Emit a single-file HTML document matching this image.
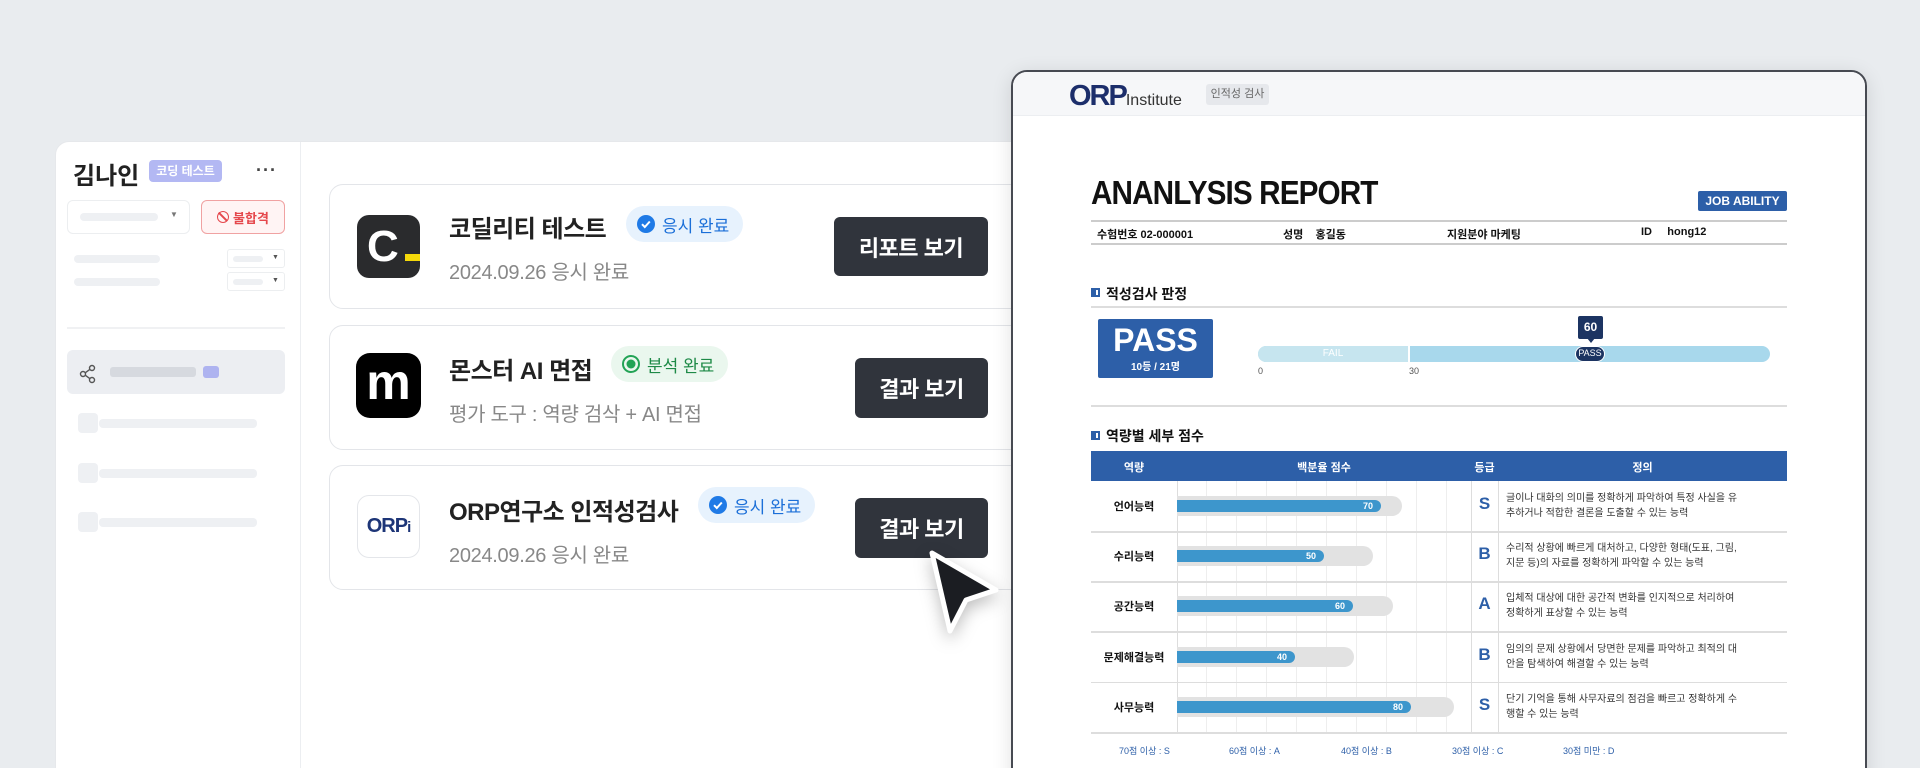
<!DOCTYPE html>
<html><head><meta charset="utf-8"><style>
*{box-sizing:border-box;margin:0;padding:0}
html,body{width:1920px;height:768px;overflow:hidden}
body{background:#e9ecef;font-family:"Liberation Sans","Noto Sans CJK KR",sans-serif}
#w{position:relative;width:1920px;height:768px;overflow:hidden;background:#e9ecef}
.a{position:absolute}
.sk{position:absolute;background:#eef0f3;border-radius:4px}
.card{position:absolute;left:329px;width:760px;height:125px;background:#fff;border:1.5px solid #e3e5e9;border-radius:14px}
.title{position:absolute;left:449px;font-size:24px;font-weight:bold;color:#222;letter-spacing:-0.5px}
.sub{position:absolute;left:449px;font-size:20px;color:#888;letter-spacing:-0.3px}
.badge{position:absolute;height:36px;border-radius:18px;font-size:17px;display:flex;align-items:center;padding:0 14px 0 10px;gap:6px}
.btn{position:absolute;background:#30343c;color:#fff;font-size:22px;font-weight:bold;border-radius:6px;display:flex;align-items:center;justify-content:center;letter-spacing:-0.5px}
.rep{position:absolute;left:1011px;top:70px;width:856px;height:720px;background:#fff;border:2px solid #474a52;border-radius:16px;overflow:hidden;box-shadow:0 4px 20px rgba(0,0,0,.12)}
.r{position:absolute;color:#111}
</style></head><body><div id="w">
<div class="a" style="left:55px;top:141px;width:1100px;height:640px;background:#fff;border-radius:14px 0 0 0;border:1px solid #e6e8eb"></div>
<div class="a" style="left:300px;top:142px;width:1px;height:626px;background:#eceef1"></div>
<div class="a" style="left:73px;top:156px;font-size:24px;font-weight:bold;color:#222">김나인</div>
<div class="a" style="left:149px;top:160px;width:73px;height:22px;background:#b3b8f3;border-radius:4px;color:#fff;font-size:12px;font-weight:bold;text-align:center;line-height:22px">코딩 테스트</div>
<div class="a" style="left:256px;top:160px;font-size:18px;color:#444;font-weight:bold;letter-spacing:1px">···</div>
<div class="a" style="left:67px;top:200px;width:123px;height:34px;border:1px solid #eceef0;border-radius:6px"></div>
<div class="sk" style="left:80px;top:213px;width:78px;height:8px"></div>
<div class="a" style="left:170px;top:210px;font-size:8px;color:#777">▼</div>
<div class="a" style="left:201px;top:200px;width:84px;height:34px;border:1.5px solid #f0a2a2;background:#fff4f4;border-radius:6px;color:#e5484d;font-size:13px;font-weight:bold;display:flex;align-items:center;justify-content:center;gap:4px"><span style="display:inline-block;width:12px;height:12px;border:1.5px solid #e5484d;border-radius:50%;position:relative"><span style="position:absolute;left:4px;top:-1px;width:1.5px;height:12px;background:#e5484d;transform:rotate(-45deg)"></span></span>불합격</div>
<div class="sk" style="left:74px;top:255px;width:86px;height:8px"></div>
<div class="sk" style="left:74px;top:278px;width:86px;height:8px"></div>
<div class="a" style="left:227px;top:249px;width:58px;height:19px;border:1px solid #eceef0;border-radius:3px"></div>
<div class="a" style="left:227px;top:272px;width:58px;height:19px;border:1px solid #eceef0;border-radius:3px"></div>
<div class="sk" style="left:233px;top:256px;width:30px;height:6px"></div><div class="a" style="left:272px;top:254px;font-size:7px;color:#555">▼</div>
<div class="sk" style="left:233px;top:279px;width:30px;height:6px"></div><div class="a" style="left:272px;top:277px;font-size:7px;color:#555">▼</div>
<div class="a" style="left:67px;top:327px;width:218px;height:2px;background:#f0f1f3"></div>
<div class="a" style="left:67px;top:350px;width:218px;height:44px;background:#eceef2;border-radius:6px"></div>
<svg class="a" style="left:78px;top:364px" width="20" height="20" viewBox="0 0 20 20" fill="none" stroke="#555" stroke-width="1.4"><circle cx="14" cy="4" r="2.5"/><circle cx="5" cy="10" r="2.5"/><circle cx="14" cy="16" r="2.5"/><path d="M7.2 8.8l4.6-3.4M7.2 11.2l4.6 3.4"/></svg>
<div class="a" style="left:110px;top:367px;width:86px;height:10px;background:#d6d9df;border-radius:3px"></div>
<div class="a" style="left:203px;top:366px;width:16px;height:12px;background:#aeb3f0;border-radius:3px"></div>
<div class="sk" style="left:78px;top:413px;width:20px;height:20px"></div><div class="sk" style="left:99px;top:419px;width:158px;height:9px"></div>
<div class="sk" style="left:78px;top:463px;width:20px;height:20px"></div><div class="sk" style="left:99px;top:469px;width:158px;height:9px"></div>
<div class="sk" style="left:78px;top:512px;width:20px;height:20px"></div><div class="sk" style="left:99px;top:518px;width:158px;height:9px"></div>

<div class="card" style="top:184px"></div>
<div class="card" style="top:325px"></div>
<div class="card" style="top:465px"></div>
<div class="a" style="left:357px;top:215px;width:63px;height:63px;background:#2a2b2d;border-radius:12px;color:#fff;font-size:44px;font-weight:bold;line-height:63px;padding-left:10px">C</div>
<div class="a" style="left:405px;top:254px;width:15px;height:7px;background:#f5d90a"></div>
<div class="a" style="left:356px;top:353px;width:65px;height:65px;background:#000;border-radius:14px;color:#fff;font-size:50px;font-weight:bold;line-height:58px;text-align:center">m</div>
<div class="a" style="left:357px;top:495px;width:63px;height:63px;background:#fff;border:1.5px solid #e4e6ea;border-radius:12px;color:#1d3577;font-size:20px;font-weight:bold;line-height:60px;text-align:center;letter-spacing:-1px">ORP<span style="font-size:15px">i</span></div>

<div class="title" style="top:209px">코딜리티 테스트</div>
<div class="sub" style="top:256px">2024.09.26 응시 완료</div>
<div class="badge" style="left:626px;top:206px;background:#e7f2fd;color:#1b6fd8"><svg width="20" height="20"><circle cx="10" cy="10" r="9" fill="#1f7ae6"/><path d="M6 10.2l2.8 2.8 5-5.5" stroke="#fff" stroke-width="2" fill="none"/></svg>응시 완료</div>
<div class="btn" style="left:834px;top:217px;width:154px;height:59px">리포트 보기</div>

<div class="title" style="top:351px">몬스터 AI 면접</div>
<div class="sub" style="top:398px">평가 도구 : 역량 검삭 + AI 면접</div>
<div class="badge" style="left:611px;top:346px;background:#eaf7ee;color:#1e8a47"><svg width="20" height="20"><circle cx="10" cy="10" r="8" fill="none" stroke="#22a355" stroke-width="2"/><circle cx="10" cy="10" r="4.5" fill="#22a355"/></svg>분석 완료</div>
<div class="btn" style="left:855px;top:358px;width:133px;height:60px">결과 보기</div>

<div class="title" style="top:492px">ORP연구소 인적성검사</div>
<div class="sub" style="top:539px">2024.09.26 응시 완료</div>
<div class="badge" style="left:698px;top:487px;background:#e7f2fd;color:#1b6fd8"><svg width="20" height="20"><circle cx="10" cy="10" r="9" fill="#1f7ae6"/><path d="M6 10.2l2.8 2.8 5-5.5" stroke="#fff" stroke-width="2" fill="none"/></svg>응시 완료</div>
<div class="btn" style="left:855px;top:498px;width:133px;height:60px">결과 보기</div>

<div class="rep">
 <div class="a" style="left:0;top:0;width:856px;height:44px;background:#f6f7f9;border-bottom:1px solid #eceef1"></div>
 <div class="a" style="left:56px;top:8px;font-size:29px;font-weight:bold;color:#1c2e6b;letter-spacing:-2px">ORP<span style="font-size:16px;font-weight:normal;color:#333;letter-spacing:0">Institute</span></div>
 <div class="a" style="left:193px;top:12px;width:63px;height:21px;background:#e6e8ec;border-radius:3px;font-size:11px;color:#666;text-align:center;line-height:21px">인적성 검사</div>
 <div class="r" style="left:78px;top:102px;font-size:33px;font-weight:bold;letter-spacing:-1px;transform:scaleX(.9);transform-origin:left">ANANLYSIS REPORT</div>
 <div class="a" style="left:685px;top:119px;width:89px;height:20px;background:#2d5fa8;border-radius:2px;color:#fff;font-size:12px;font-weight:bold;text-align:center;line-height:20px">JOB ABILITY</div>
 <div class="a" style="left:78px;top:148px;width:696px;height:2px;background:#ccc"></div>
 <div class="a" style="left:78px;top:171px;width:696px;height:2px;background:#ccc"></div>
 <div class="r" style="left:84px;top:154px;font-size:11px;font-weight:bold">수험번호 02-000001</div>
 <div class="r" style="left:270px;top:154px;font-size:11px;font-weight:bold">성명 &nbsp;&nbsp;&nbsp;홍길동</div>
 <div class="r" style="left:434px;top:154px;font-size:11px;font-weight:bold">지원분야 마케팅</div>
 <div class="r" style="left:628px;top:154px;font-size:11px;font-weight:bold">ID &nbsp;&nbsp;&nbsp;&nbsp;hong12</div>
 <div class="a" style="left:78px;top:216px;width:9px;height:9px;border:2px solid #2d5fa8;background:#fff;border-left-width:5px"></div>
 <div class="r" style="left:93px;top:212px;font-size:14px;font-weight:bold">적성검사 판정</div>
 <div class="a" style="left:78px;top:234px;width:696px;height:2px;background:#ddd"></div>
 <div class="a" style="left:85px;top:247px;width:115px;height:59px;background:#2d5fa8;border-radius:2px;color:#fff;text-align:center">
  <div style="font-size:32px;font-weight:bold;line-height:36px;margin-top:3px">PASS</div><div style="font-size:10px;font-weight:bold">10등 / 21명</div></div>
 <div class="a" style="left:245px;top:274px;width:512px;height:16px;background:#a8d8ec;border-radius:8px"></div>
 <div class="a" style="left:245px;top:274px;width:152px;height:16px;background:#c6e5ef;border-radius:8px 0 0 8px;border-right:2px solid #fff;color:#fff;font-size:10px;text-align:center;line-height:16px">FAIL</div>
 <div class="a" style="left:562px;top:274px;width:30px;height:16px;background:#1c3462;border:1.5px solid #fff;border-radius:8px;color:#fff;font-size:9px;text-align:center;line-height:13px">PASS</div>
 <div class="a" style="left:565px;top:244px;width:25px;height:23px;background:#1c3462;border-radius:2px;color:#fff;font-size:12px;font-weight:bold;text-align:center;line-height:23px">60</div>
 <div class="a" style="left:574px;top:266px;border:4px solid transparent;border-top:5px solid #1c3462"></div>
 <div class="a" style="left:245px;top:294px;font-size:9px;color:#555">0</div>
 <div class="a" style="left:396px;top:294px;font-size:9px;color:#555">30</div>
 <div class="a" style="left:78px;top:333px;width:696px;height:2px;background:#ddd"></div>
 <div class="a" style="left:78px;top:359px;width:9px;height:9px;border:2px solid #2d5fa8;background:#fff;border-left-width:5px"></div>
 <div class="r" style="left:93px;top:354px;font-size:14px;font-weight:bold">역량별 세부 점수</div>
 <div class="a" style="left:78px;top:379px;width:696px;height:30px;background:#2d5fa8;color:#fff;font-size:11px;font-weight:bold">
  <span class="a" style="left:0;width:86px;text-align:center;top:8px">역량</span>
  <span class="a" style="left:86px;width:294px;text-align:center;top:8px">백분율 점수</span>
  <span class="a" style="left:380px;width:27px;text-align:center;top:8px">등급</span>
  <span class="a" style="left:407px;width:289px;text-align:center;top:8px">정의</span>
 </div>
 <div class="a" style="left:164px;top:409px;width:1px;height:251px;background:#ddd"></div>
 <div class="a" style="left:458px;top:409px;width:1px;height:251px;background:#ddd"></div>
 <div class="a" style="left:485px;top:409px;width:1px;height:251px;background:#ddd"></div>
 <div class="a" style="left:164px;top:409px;width:294px;height:251px;background:repeating-linear-gradient(90deg,transparent 0 29px,#eee 29px 30px)"></div>
 <div id="rows"></div>
 <div class="a" style="left:78px;top:660px;width:696px;height:2px;background:#ddd"></div>
 <div class="a" style="left:78px;top:672px;width:696px;font-size:9px;color:#2d5fa8">
  <span class="a" style="left:28px">70점 이상 : S</span><span class="a" style="left:138px">60점 이상 : A</span><span class="a" style="left:250px">40점 이상 : B</span><span class="a" style="left:361px">30점 이상 : C</span><span class="a" style="left:472px">30점 미만 : D</span></div>
</div>
<svg class="a" style="left:920px;top:545px;filter:drop-shadow(0 6px 8px rgba(0,0,0,.25))" width="85" height="95" viewBox="0 0 85 95"><path d="M12 8 L76 45 L46 55 L30 86 Z" fill="#1b1d22" stroke="#fff" stroke-width="5" stroke-linejoin="round"/></svg>
</div>
<script>
var d=[["언어능력",70,204,225,"S","글이나 대화의 의미를 정확하게 파악하여 특정 사실을 유","추하거나 적합한 결론을 도출할 수 있는 능력"],
["수리능력",50,147,196,"B","수리적 상황에 빠르게 대처하고, 다양한 형태(도표, 그림,","지문 등)의 자료를 정확하게 파악할 수 있는 능력"],
["공간능력",60,176,216,"A","입체적 대상에 대한 공간적 변화를 인지적으로 처리하여","정확하게 표상할 수 있는 능력"],
["문제해결능력",40,118,177,"B","임의의 문제 상황에서 당면한 문제를 파악하고 최적의 대","안을 탐색하여 해결할 수 있는 능력"],
["사무능력",80,234,277,"S","단기 기억을 통해 사무자료의 점검을 빠르고 정확하게 수","행할 수 있는 능력"]];
var h="";d.forEach(function(r,i){var t=409+i*50.2;
h+='<div class="r" style="left:78px;top:'+(t+17)+'px;width:86px;text-align:center;font-size:11px;font-weight:bold">'+r[0]+'</div>';
h+='<div class="a" style="left:164px;top:'+(t+15)+'px;width:'+r[3]+'px;height:20px;background:#e2e2e2;border-radius:0 10px 10px 0"></div>';
h+='<div class="a" style="left:164px;top:'+(t+19)+'px;width:'+r[2]+'px;height:12px;background:#3d96cc;border-radius:0 6px 6px 0;color:#fff;font-size:9px;font-weight:bold;text-align:right;padding-right:8px;line-height:12px">'+r[1]+'</div>';
h+='<div class="a" style="left:458px;top:'+(t+13)+'px;width:27px;text-align:center;font-size:17px;font-weight:bold;color:#2d5fa8">'+r[4]+'</div>';
h+='<div class="r" style="left:493px;top:'+(t+10)+'px;font-size:10px;line-height:15px;color:#333">'+r[5]+'<br>'+r[6]+'</div>';
if(i<4)h+='<div class="a" style="left:78px;top:'+(t+50)+'px;width:696px;height:1.5px;background:#ddd"></div>';});
document.getElementById("rows").innerHTML=h;
</script>
</body></html>
